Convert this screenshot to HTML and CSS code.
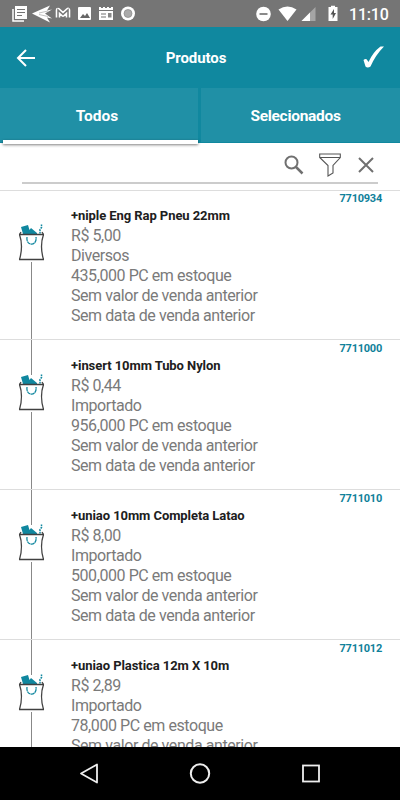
FILE: index.html
```html
<!DOCTYPE html>
<html lang="pt-BR">
<head>
    <meta charset="UTF-8">
    <meta name="viewport" content="width=device-width, initial-scale=1.0">
    <title>Produtos</title>
    <link rel="stylesheet" href="styles.css">
</head>
<body>
    <svg class="sprite">
        <symbol id="bag" viewBox="0 0 28 38">
            <path d="M3 4l7-2 1.500 5 1.500-2 6 5v1H5z" fill="#10879f"/>
            <path d="M22 10.500V6.500l1.500-2V1" fill="none" stroke="#10879f" stroke-width="1.500" stroke-dasharray="1.800 .8"/>
            <path d="M1.500 11.500L3 9M25.500 11.500L24 9M1.500 11.500Q5.500 23 1.500 36.500M25.500 11.500Q21.500 23 25.500 36.500" fill="none" stroke="#444" stroke-width="1.300"/>
            <path d="M1 11.500h25M1 36.500h25" stroke="#404040" stroke-width="1.400"/>
            <path d="M9 14c-1.500 9.500 10.500 9.500 9 0" fill="none" stroke="#10879f" stroke-width="1.300" stroke-dasharray="4 .4"/>
        </symbol>
    </svg>

    <div class="screen">
        <div class="status-bar">
            <svg class="notifications" width="126" height="18" viewBox="0 0 126 18">
                <path d="M1 4v12h11" fill="none" stroke="#fff" stroke-width="1.500"/>
                <path d="M3 1h12v13H3z" fill="#fff"/>
                <path d="M5 4.500h8M5 7.500h8M5 10.500h5" stroke="#757575" stroke-width="1.200"/>
                <path d="M20 8.500L38 .5l-3 5 5-1-7 4 7 5-5-1 3 5z" fill="#fff"/>
                <path d="M27 8l9-2M27 9.500l9 2" stroke="#999" stroke-width=".6"/>
                <path d="M46 12.500V5l5 4.500L56 5v7.500" fill="none" stroke="#fff" stroke-width="4.600" stroke-linejoin="round"/>
                <path d="M46 13.500V5l5 4.500L56 5v8.500" fill="none" stroke="#757575" stroke-width="1.500"/>
                <rect x="66" y="2" width="13" height="13" rx="1" fill="#fff"/>
                <path d="M68 13l3-4 2 2 2-3 3 5z" fill="#666"/>
                <path d="M87 2h2v1h2V2h2v1h2V2h2v1h2V2h2v13H87z" fill="#fff"/>
                <path d="M87 5.500h14M89 9h5M89 12h5" stroke="#757575" stroke-width="1.200"/>
                <rect x="96" y="8" width="3.500" height="4.500" fill="#888"/>
                <circle cx="116" cy="8.500" r="7" fill="#fff"/>
                <circle cx="116" cy="8.500" r="4" fill="#aaa" stroke="#888" stroke-width=".7"/>
            </svg>
            <svg width="84" height="18" viewBox="0 0 84 18">
                <circle cx="8.500" cy="9" r="7.300" fill="#fff"/>
                <path d="M4.500 9h8" stroke="#757575" stroke-width="1.700"/>
                <path d="M23.500 4.500q9-6 18 0L32.500 16z" fill="#fff"/>
                <path d="M60.500 2v14h-14z" fill="#a5a5a5"/>
                <path d="M55 7.500V16h-8.500z" fill="#fff"/>
                <path d="M73.500 2H76V.8h4V2h2.500v14h-9z" fill="#fff"/>
                <path d="M79 4l-3.500 5.500h2.200V14L81 8h-2z" fill="#555"/>
            </svg>
            <span class="clock">11:10</span>
        </div>

        <header class="toolbar">
            <svg width="20" height="20" viewBox="0 0 20 20">
                <path d="M19 10H2.500M10 2L2 10l8 8" fill="none" stroke="#fff" stroke-width="2"/>
            </svg>
            <h1>Produtos</h1>
            <svg width="22" height="24" viewBox="0 0 22 24">
                <path d="M1.500 14q2.500-2 4 .5l1 1.500Q11 6 18.500.500H22Q13.500 9 8.500 20.500q-3 2-5 0z" fill="#fff"/>
            </svg>
        </header>

        <nav class="tabs">
            <a class="tab active">Todos</a>
            <a class="tab">Selecionados</a>
        </nav>

        <div class="search">
            <div class="search-field">
                <svg width="20" height="20" viewBox="0 0 20 20">
                    <circle cx="7.500" cy="7.500" r="6" fill="none" stroke="#707070" stroke-width="2"/>
                    <path d="M12 12l6.500 6.500" stroke="#707070" stroke-width="2.500"/>
                </svg>
                <svg width="22" height="24" viewBox="0 0 22 24">
                    <path d="M.7 1h20.600v3.500l-7.300 8v7.500l-5 3v-10.500l-8.300-8zM.7 4.500h20.600" fill="none" stroke="#555" stroke-width="1.100"/>
                </svg>
                <svg width="16" height="16" viewBox="0 0 16 16">
                    <path d="M1 1l14 14M15 1L1 15" stroke="#707070" stroke-width="2"/>
                </svg>
            </div>
        </div>

        <main class="list">
            <article class="product">
                <div class="timeline"><i class="line top"></i><svg class="bag"><use href="#bag"/></svg><i class="line"></i></div>
                <div class="info">
                    <span class="code">7710934</span>
                    <h2>+niple Eng Rap Pneu 22mm</h2>
                    <p>R$ 5,00</p>
                    <p>Diversos</p>
                    <p>435,000 PC em estoque</p>
                    <p>Sem valor de venda anterior</p>
                    <p>Sem data de venda anterior</p>
                </div>
            </article>
            <article class="product">
                <div class="timeline"><i class="line top"></i><svg class="bag"><use href="#bag"/></svg><i class="line"></i></div>
                <div class="info">
                    <span class="code">7711000</span>
                    <h2>+insert 10mm Tubo Nylon</h2>
                    <p>R$ 0,44</p>
                    <p>Importado</p>
                    <p>956,000 PC em estoque</p>
                    <p>Sem valor de venda anterior</p>
                    <p>Sem data de venda anterior</p>
                </div>
            </article>
            <article class="product">
                <div class="timeline"><i class="line top"></i><svg class="bag"><use href="#bag"/></svg><i class="line"></i></div>
                <div class="info">
                    <span class="code">7711010</span>
                    <h2>+uniao 10mm Completa Latao</h2>
                    <p>R$ 8,00</p>
                    <p>Importado</p>
                    <p>500,000 PC em estoque</p>
                    <p>Sem valor de venda anterior</p>
                    <p>Sem data de venda anterior</p>
                </div>
            </article>
            <article class="product">
                <div class="timeline"><i class="line top"></i><svg class="bag"><use href="#bag"/></svg><i class="line"></i></div>
                <div class="info">
                    <span class="code">7711012</span>
                    <h2>+uniao Plastica 12m X 10m</h2>
                    <p>R$ 2,89</p>
                    <p>Importado</p>
                    <p>78,000 PC em estoque</p>
                    <p>Sem valor de venda anterior</p>
                </div>
            </article>
        </main>

        <footer class="nav-bar">
            <svg width="22" height="22" viewBox="0 0 22 22"><path d="M19 1.500v18L3 10.500z" fill="none" stroke="#eee" stroke-width="1.800" stroke-linejoin="round"/></svg>
            <svg width="22" height="22" viewBox="0 0 22 22"><circle cx="11" cy="10.500" r="9.200" fill="none" stroke="#eee" stroke-width="2"/></svg>
            <svg width="22" height="22" viewBox="0 0 22 22"><rect x="3" y="2.500" width="16" height="16" fill="none" stroke="#eee" stroke-width="1.800"/></svg>
        </footer>
    </div>
</body>
</html>
```

FILE: styles.css
```css
* {
    box-sizing: border-box;
}
body {
    font-family: Roboto, "Liberation Sans", sans-serif;
    margin: 0;
    background-color: white;
}
h1, h2, p {
    margin: 0;
}
svg {
    display: block;
    flex-shrink: 0;
}
.sprite {
    display: none;
}
.screen {
    display: flex;
    flex-direction: column;
    width: 400px;
    height: 800px;
    overflow: hidden;
}
.status-bar {
    display: flex;
    flex-shrink: 0;
    align-items: center;
    height: 27px;
    padding: 0 11px 0 12px;
    background-color: #757575;
    color: white;
}
.notifications {
    margin-right: auto;
}
.clock {
    width: 40px;
    margin-left: 10px;
    font-size: 16px;
    font-weight: 500;
    line-height: 26px;
    padding-top: 2px;
    letter-spacing: -0.2px;
    white-space: nowrap;
}

/* Header */
.toolbar {
    display: flex;
    flex-shrink: 0;
    align-items: center;
    justify-content: space-between;
    height: 61px;
    padding: 0 16px;
    background-color: #10889f;
    color: white;
}
.toolbar h1 {
    margin-right: 6px;
    font-size: 15px;
    font-weight: 700;
    letter-spacing: -0.1px;
}
.tabs {
    display: flex;
    flex-shrink: 0;
    gap: 3px;
    height: 55px;
    background-color: #10889f;
    border-bottom: 1px solid #10889f;
}
.tab {
    flex: 0 0 198px;
    height: 54px;
    line-height: 56px;
    text-align: center;
    background-color: #2090a6;
    color: white;
    font-size: 15.5px;
    font-weight: 700;
    letter-spacing: -0.3px;
    padding-right: 10px;
}
.tab + .tab {
    flex: 1;
}
.tab.active {
    position: relative;
    padding-right: 4px;
    letter-spacing: 0;
}
.tab.active::after {
    content: "";
    position: absolute;
    left: 3px;
    right: 0;
    bottom: -2px;
    height: 4px;
    background-color: white;
    box-shadow: 0 1px 3px rgba(0,0,0,0.5);
}

/* Search */
.search {
    flex-shrink: 0;
    height: 48px;
    padding: 4px 22px 0;
    border-bottom: 1px solid #ddd;
}
.search-field {
    display: flex;
    align-items: center;
    justify-content: flex-end;
    height: 37px;
    padding: 1px 4px 0 0;
    gap: 17px;
    border-bottom: 2px solid #ccc;
}
.search-field svg:first-child {
    margin-right: -2px;
}

/* Product list */
.list {
    flex: 1;
    min-height: 0;
    overflow: hidden;
}
.product {
    display: flex;
    height: 148px;
}
.product + .product {
    height: 150px;
    border-top: 1px solid #ddd;
}
.timeline {
    display: flex;
    flex-direction: column;
    align-items: center;
    width: 28px;
    margin-left: 18px;
    margin-right: 25px;
}
.bag {
    width: 28px;
    height: 38px;
}
.line {
    flex: 1;
    width: 1px;
    margin-right: 1px;
    margin-top: 1px;
    background-color: #888;
}
.line.top {
    flex: 0 0 35px;
    margin-top: 0;
    margin-bottom: -2px;
}
.product:first-child .line.top {
    visibility: hidden;
    margin-bottom: -3px;
}
.info {
    display: flex;
    flex-direction: column;
    flex: 1;
    font-size: 16px;
    line-height: 20px;
    color: #7a7a7a;
}
.product + .product .info {
    padding-top: 1px;
}
.code {
    align-self: flex-end;
    height: 15px;
    line-height: 15px;
    margin-right: 18px;
    font-size: 11px;
    font-weight: 700;
    letter-spacing: -0.25px;
    color: #10819a;
}
.info h2 {
    font-size: 13px;
    font-weight: 700;
    line-height: 20px;
    letter-spacing: -0.07px;
    color: #202020;
}
.info p {
    letter-spacing: -0.43px;
    white-space: nowrap;
}

.nav-bar {
    display: flex;
    flex-shrink: 0;
    justify-content: center;
    align-items: center;
    gap: 89px;
    height: 53px;
    background-color: black;
}
```
